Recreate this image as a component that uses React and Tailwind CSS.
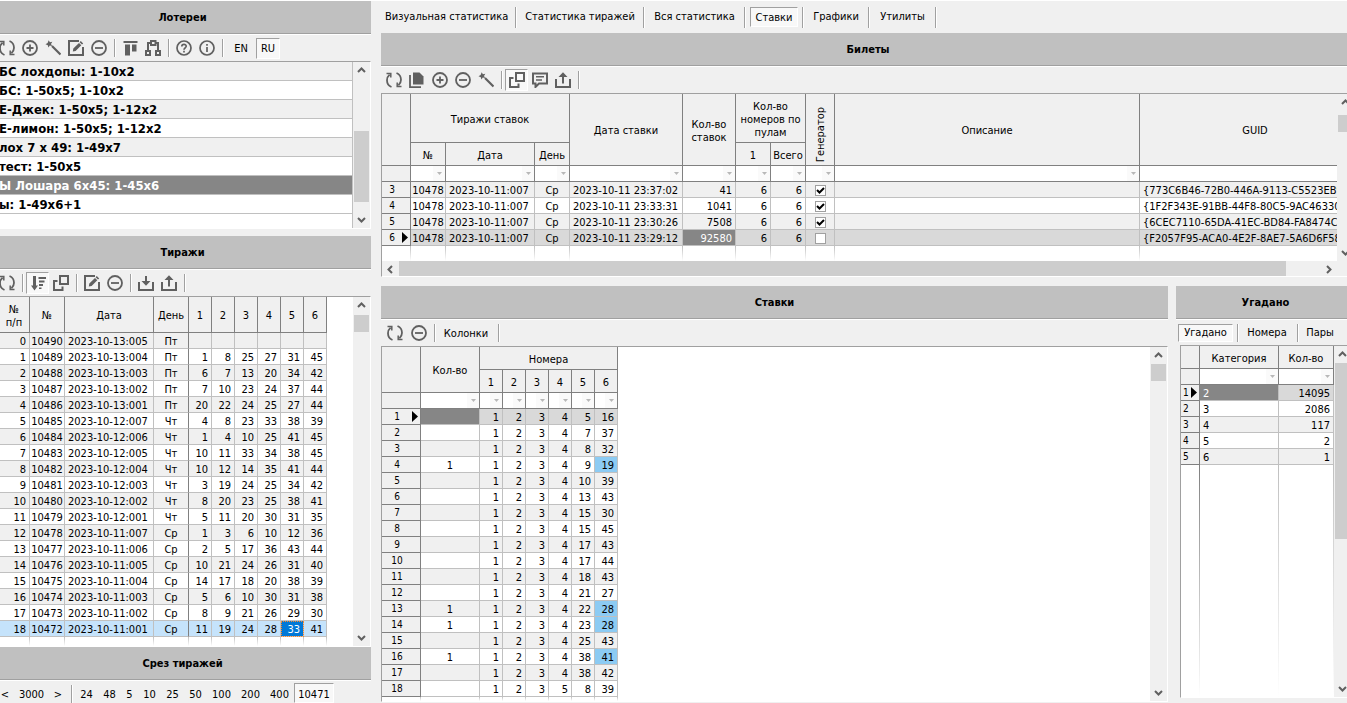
import { useState } from "react";
import clsx from "clsx";

const LOTTERIES = [
  "БС лохдопы: 1-10x2",
  "БС: 1-50x5; 1-10x2",
  "Е-Джек: 1-50x5; 1-12x2",
  "Е-лимон: 1-50x5; 1-12x2",
  "лох 7 x 49: 1-49x7",
  "тест: 1-50x5",
  "Ы Лошара 6x45: 1-45x6",
  "ы: 1-49x6+1",
];

const DRAWS = [
  [10490, "2023-10-13:005", "Пт", ["", "", "", "", "", ""]],
  [10489, "2023-10-13:004", "Пт", [1, 8, 25, 27, 31, 45]],
  [10488, "2023-10-13:003", "Пт", [6, 7, 13, 20, 34, 42]],
  [10487, "2023-10-13:002", "Пт", [7, 10, 23, 24, 37, 44]],
  [10486, "2023-10-13:001", "Пт", [20, 22, 24, 25, 27, 44]],
  [10485, "2023-10-12:007", "Чт", [4, 8, 23, 33, 38, 39]],
  [10484, "2023-10-12:006", "Чт", [1, 4, 10, 25, 41, 45]],
  [10483, "2023-10-12:005", "Чт", [10, 11, 33, 34, 38, 45]],
  [10482, "2023-10-12:004", "Чт", [10, 12, 14, 35, 41, 44]],
  [10481, "2023-10-12:003", "Чт", [3, 19, 24, 25, 34, 42]],
  [10480, "2023-10-12:002", "Чт", [8, 20, 23, 25, 38, 41]],
  [10479, "2023-10-12:001", "Чт", [5, 11, 20, 30, 31, 35]],
  [10478, "2023-10-11:007", "Ср", [1, 3, 6, 10, 12, 36]],
  [10477, "2023-10-11:006", "Ср", [2, 5, 17, 36, 43, 44]],
  [10476, "2023-10-11:005", "Ср", [10, 21, 24, 26, 31, 40]],
  [10475, "2023-10-11:004", "Ср", [14, 17, 18, 20, 38, 39]],
  [10474, "2023-10-11:003", "Ср", [5, 6, 10, 30, 31, 38]],
  [10473, "2023-10-11:002", "Ср", [8, 9, 21, 26, 29, 30]],
  [10472, "2023-10-11:001", "Ср", [11, 19, 24, 28, 33, 41]],
];

const TICKETS = [
  { n: 3, time: "23:37:02", bets: 41, auto: true, guid: "{773C6B46-72B0-446A-9113-C5523EB9E" },
  { n: 4, time: "23:33:31", bets: 1041, auto: true, guid: "{1F2F343E-91BB-44F8-80C5-9AC46330D" },
  { n: 5, time: "23:30:26", bets: 7508, auto: true, guid: "{6CEC7110-65DA-41EC-BD84-FA8474C2" },
  { n: 6, time: "23:29:12", bets: 92580, auto: false, guid: "{F2057F95-ACA0-4E2F-8AE7-5A6D6F58" },
];

const BETS = [
  ["", 4, 5, 16],
  ["", 4, 7, 37],
  ["", 4, 8, 32],
  [1, 4, 9, 19],
  ["", 4, 10, 39],
  ["", 4, 13, 43],
  ["", 4, 15, 30],
  ["", 4, 15, 45],
  ["", 4, 17, 43],
  ["", 4, 17, 44],
  ["", 4, 18, 43],
  ["", 4, 21, 27],
  [1, 4, 22, 28],
  [1, 4, 23, 28],
  ["", 4, 25, 43],
  [1, 4, 38, 41],
  ["", 4, 38, 42],
  ["", 5, 8, 39],
];

const GUESSES = [
  [2, 14095],
  [3, 2086],
  [4, 117],
  [5, 2],
  [6, 1],
];

const NUMS = [1, 2, 3, 4, 5, 6];
const NUM_COLS = ["w-[23px]", "w-[23px]", "w-[23px]", "w-[23px]", "w-[23px]", "w-[23px]"];
const DRAW_COLS = ["w-[35px]", "w-[35px]", "w-[89px]", "w-[35px]", ...NUM_COLS];
const TICKET_COLS = [
  "w-[29px]",
  "w-[35px]",
  "w-[89px]",
  "w-[35px]",
  "w-[113px]",
  "w-[53px]",
  "w-[35px]",
  "w-[35px]",
  "w-[29px]",
  "w-[305px]",
  "w-[231px]",
];
const BET_COLS = ["w-[39px]", "w-[59px]", ...NUM_COLS];
const GUESS_COLS = ["w-[19px]", "w-[79px]", "w-[55px]"];

/* ---------- icons ---------- */

const ICONS = {
  refresh: (
    <g fill="none" stroke="currentColor" strokeWidth="1.800">
      <path d="M5.500 15C2.600 13.800 1 11.200 1 8.200C1 6 1.800 4.200 3.600 2.600" />
      <path d="M10.500 1C13.400 2.200 15 4.800 15 7.800C15 10 14.200 11.800 12.400 13.400" />
      <path d="M0.500 1.500H4.800V5.500" strokeWidth="1.500" />
      <path d="M15.500 14.500H11.200V10.500" strokeWidth="1.500" />
    </g>
  ),
  plus: (
    <g fill="none" stroke="currentColor" strokeWidth="1.800">
      <circle cx="8" cy="8" r="7" />
      <path d="M8 4.500V11.500M4.500 8H11.500" />
    </g>
  ),
  minus: (
    <g fill="none" stroke="currentColor" strokeWidth="1.800">
      <circle cx="8" cy="8" r="7" />
      <path d="M4 8H12" />
    </g>
  ),
  wand: (
    <g>
      <path d="M7 6L15.500 14.500" stroke="currentColor" strokeWidth="2.200" />
      <path
        d="M3.700 0.200L4.900 2.200L7.300 1.800L6 3.900L7.200 6L4.800 5.600L3.400 7.500L2.800 5.200L0.500 4.300L2.600 3Z"
        fill="currentColor"
      />
    </g>
  ),
  edit: (
    <g>
      <path d="M11 1H1V15H15V7" fill="none" stroke="currentColor" strokeWidth="2" />
      <path d="M12.800 1L15.200 3.400L14 4.600L11.600 2.200ZM11 2.900L13.300 5.200L7.600 10.900L4.800 11.400L5.300 8.600Z" fill="currentColor" />
    </g>
  ),
  alignTop: <path d="M1.500 1H15.500V3H1.500ZM3 4.500H8V15.500H3ZM10 4.500H14.500V11.500H10Z" fill="currentColor" />,
  network: (
    <g fill="none" stroke="currentColor" strokeWidth="2">
      <rect x="6" y="1" width="4.500" height="4" />
      <rect x="1" y="11" width="4" height="4" />
      <rect x="11" y="11" width="4" height="4" />
      <path d="M6 3H3V10M10.500 3H13V10" />
    </g>
  ),
  help: (
    <g fill="none" stroke="currentColor" strokeWidth="1.700">
      <circle cx="8" cy="8" r="7" />
      <path d="M5.800 6.500C5.800 3.500 10.300 3.700 10.200 6.300C10.100 7.800 8 7.900 8 9.700M8 10.800V12.500" />
    </g>
  ),
  info: (
    <g fill="none" stroke="currentColor" strokeWidth="1.700">
      <circle cx="8" cy="8" r="7" />
      <path d="M8 7V12M8 4V5.700" />
    </g>
  ),
  sort: (
    <g fill="currentColor">
      <path d="M3 1H6V10.500H8L4.500 15.500L1 10.500H3Z" />
      <path d="M8.500 2H16V4H8.500ZM9 5.500H14.500V7.500H9ZM9 9H13V11H9ZM9 12.500H11.500V14H9Z" />
    </g>
  ),
  popout: (
    <g fill="none" stroke="currentColor" strokeWidth="2">
      <rect x="7" y="1" width="8" height="8" />
      <path d="M4.500 6H1V15H9.500V11.500" />
    </g>
  ),
  download: (
    <g>
      <path d="M1 7V15H15V7" fill="none" stroke="currentColor" strokeWidth="2" />
      <path d="M7 1H9V6H12.500L8 10.800L3.500 6H7Z" fill="currentColor" />
    </g>
  ),
  upload: (
    <g>
      <path d="M1 7V15H15V7" fill="none" stroke="currentColor" strokeWidth="2" />
      <path d="M7 11.500H9V5H12.500L8 0.300L3.500 5H7Z" fill="currentColor" />
    </g>
  ),
  copy: (
    <g>
      <path d="M4 0.500H10.500L14.500 4.500V12.500H4Z" fill="currentColor" />
      <path d="M1 3V15.200H12" fill="none" stroke="currentColor" strokeWidth="1.800" />
    </g>
  ),
  comment: (
    <g fill="none" stroke="currentColor">
      <path d="M1 1.500H15V11.500H7L3.500 15V11.500H1Z" strokeWidth="2" />
      <path d="M4 4.800H12M4 8H10" strokeWidth="1.600" />
    </g>
  ),
};

function Icon({ name }) {
  return (
    <svg viewBox="0 0 16 16" className="size-4 text-[#606060]" aria-hidden="true">
      {ICONS[name]}
    </svg>
  );
}

/* ---------- toolbar pieces ---------- */

const SUNKEN = "border border-t-[#a0a0a0] border-l-[#a0a0a0] border-r-white border-b-white bg-[#f8f8f8]";

function IconButton({ name, label, pressed }) {
  return (
    <button
      type="button"
      aria-label={label}
      aria-pressed={pressed}
      className={clsx("flex h-[22px] w-[23px] shrink-0 items-center justify-center", pressed && SUNKEN, pressed && "pl-px")}
    >
      <Icon name={name} />
    </button>
  );
}

function TextButton({ children, className, pressed, onClick }) {
  return (
    <button
      type="button"
      aria-pressed={pressed}
      onClick={onClick}
      className={clsx("shrink-0 whitespace-nowrap text-center", pressed && SUNKEN, className)}
    >
      {children}
    </button>
  );
}

function Separator() {
  return <span className="mr-0.5 ml-1 h-[18px] w-0.5 shrink-0 border-l border-r border-l-[#a0a0a0] border-r-white" />;
}

function TabSeparator() {
  return <span className="h-[21px] w-0.5 shrink-0 border-l border-r border-l-[#a0a0a0] border-r-white" />;
}

function Toolbar({ children }) {
  return <div className="flex h-[27px] shrink-0 items-center border-t border-white pl-px">{children}</div>;
}

function PanelHeader({ children }) {
  return (
    <h2 className="flex h-[33px] shrink-0 items-center justify-center border-b border-[#a0a0a0] bg-[#c0c0c0] pt-0.5 font-bold">
      {children}
    </h2>
  );
}

/* ---------- scrollbars ---------- */

const ARROWS = {
  up: "M1 6L4.500 2.500L8 6",
  down: "M1 3L4.500 6.500L8 3",
  left: "M6 1L2.500 4.500L6 8",
  right: "M3 1L6.500 4.500L3 8",
};

function ScrollArrow({ dir }) {
  return (
    <button type="button" aria-label={dir} className="flex size-[17px] shrink-0 items-center justify-center">
      <svg viewBox="0 0 9 9" className="size-[9px]" aria-hidden="true">
        <path d={ARROWS[dir]} fill="none" stroke="#606060" strokeWidth="2" />
      </svg>
    </button>
  );
}

// track = [space before thumb, thumb, space after thumb]
function ScrollBar({ track, horizontal }) {
  const [before, thumb, after] = track;
  return (
    <div className={clsx("flex shrink-0 items-stretch bg-[#f0f0f0]", horizontal ? "h-[15px]" : "w-[17px] flex-col")}>
      <ScrollArrow dir={horizontal ? "left" : "up"} />
      <div className={clsx("flex min-h-0 flex-1", !horizontal && "flex-col px-px")}>
        <span style={{ flexGrow: before }} />
        <span className="basis-0 bg-[#cdcdcd]" style={{ flexGrow: thumb }} />
        <span style={{ flexGrow: after }} />
      </div>
      <ScrollArrow dir={horizontal ? "right" : "down"} />
    </div>
  );
}

/* ---------- grid pieces ---------- */

function GridFrame({ children, className }) {
  return (
    <div
      className={clsx(
        "flex overflow-hidden border border-t-[#a0a0a0] border-l-[#a0a0a0] border-r-white border-b-white bg-white",
        className
      )}
    >
      {children}
    </div>
  );
}

function Grid({ cols, children, label, darkFirst }) {
  return (
    <div className="flex min-w-0 flex-1 flex-col overflow-hidden">
      <table aria-label={label} className="w-0 shrink-0 table-fixed border-separate border-spacing-0">
        <colgroup>
          {cols.map((w, i) => (
            <col key={i} className={w} />
          ))}
        </colgroup>
        {children}
      </table>
      <div className="flex min-h-0 flex-1">
        {cols.map((w, i) => (
          <div key={i} className={clsx("flex shrink-0 justify-end", w)}>
            <span
              className={clsx(
                "w-px bg-linear-to-b to-white",
                darkFirst && i === 0 ? "from-[#808080]" : "from-[#c0c0c0]"
              )}
            />
          </div>
        ))}
      </div>
    </div>
  );
}

function Th({ className, children, ...rest }) {
  return (
    <th
      className={clsx(
        "border-r border-b border-[#808080] bg-[#f0f0f0] p-0 pt-0.5 text-center leading-[13px] font-normal",
        className
      )}
      {...rest}
    >
      {children}
    </th>
  );
}

function Td({ className, children }) {
  return (
    <td
      className={clsx(
        "h-4 overflow-hidden border-r border-b border-[#c0c0c0] p-0 pt-0.5 leading-[13px] whitespace-nowrap",
        className
      )}
    >
      {children}
    </td>
  );
}

function RowNumber({ n, current, narrow }) {
  return (
    <th
      scope="row"
      className="h-4 border-r border-b border-[#808080] bg-[#f0f0f0] p-0 text-[10px] leading-[15px] font-normal"
    >
      <div className="flex h-[15px] items-center">
        <span className={narrow ? "pl-0.5 text-left" : "flex-1 pl-0.5 text-center"}>{n}</span>
        <span className={clsx("flex justify-end pr-0.5", narrow ? "flex-1" : "w-2.5")}>
          {current && (
            <svg viewBox="0 0 6 11" className="h-[11px] w-1.5 shrink-0" aria-hidden="true">
              <path d="M0 0L6 5.500L0 11Z" />
            </svg>
          )}
        </span>
      </div>
    </th>
  );
}

function FilterRow({ count }) {
  return (
    <tr>
      <td className="h-4 border-r border-b border-[#808080] bg-[#f0f0f0] p-0" />
      {Array.from({ length: count }, (_, i) => (
        <td key={i} className="h-4 border-r border-b border-[#808080] bg-white p-0">
          <button type="button" aria-label="Фильтр" className="ml-auto flex h-[15px] w-3 items-center justify-center bg-[#fafafa]">
            <svg viewBox="0 0 5 3" className="h-[3px] w-[5px]" aria-hidden="true">
              <path d="M0 0H5L2.500 3Z" fill="#b8b8b8" />
            </svg>
          </button>
        </td>
      ))}
    </tr>
  );
}

function CheckCell({ checked, n }) {
  return (
    <div className="grid h-[13px] place-items-center">
      <input
        type="checkbox"
        defaultChecked={checked}
        aria-label={`Генератор ${n}`}
        className="peer col-start-1 row-start-1 size-[11px] appearance-none border border-[#a0a0a0] bg-white"
      />
      <svg
        viewBox="0 0 9 9"
        className="pointer-events-none invisible col-start-1 row-start-1 size-[9px] peer-checked:visible"
        aria-hidden="true"
      >
        <path d="M1 4L3.500 6.500L8 2" fill="none" stroke="#000" strokeWidth="2" />
      </svg>
    </div>
  );
}

/* ---------- panels ---------- */

function LotteriesPanel() {
  const [selected, setSelected] = useState(6);
  const [lang, setLang] = useState("RU");

  return (
    <section className="flex shrink-0 flex-col">
      <PanelHeader>Лотереи</PanelHeader>
      <Toolbar>
        <IconButton name="refresh" label="Обновить" />
        <IconButton name="plus" label="Добавить" />
        <IconButton name="wand" label="Мастер" />
        <IconButton name="edit" label="Изменить" />
        <IconButton name="minus" label="Удалить" />
        <Separator />
        <IconButton name="alignTop" label="Выравнивание" />
        <IconButton name="network" label="Структура" />
        <Separator />
        <IconButton name="help" label="Справка" />
        <IconButton name="info" label="О программе" />
        <Separator />
        <TextButton className="h-[21px] w-[30px] pt-0.5" pressed={lang === "EN"} onClick={() => setLang("EN")}>
          EN
        </TextButton>
        <TextButton className="h-[21px] w-6 pt-0.5" pressed={lang === "RU"} onClick={() => setLang("RU")}>
          RU
        </TextButton>
      </Toolbar>
      <GridFrame className="h-[168px]">
        <ul className="min-w-0 flex-1 border-r border-[#c0c0c0]">
          {LOTTERIES.map((name, i) => (
            <li key={name}>
              <button
                type="button"
                onClick={() => setSelected(i)}
                className={clsx(
                  "block h-[19px] w-full overflow-hidden border-b border-[#c0c0c0] pt-0.5 pl-1 text-left text-[13px] leading-4 font-bold whitespace-nowrap",
                  i === selected ? "bg-[#868686] text-white" : i % 2 ? "bg-white" : "bg-[#f0f0f0]"
                )}
              >
                {name}
              </button>
            </li>
          ))}
        </ul>
        <ScrollBar track={[52, 70, 9]} />
      </GridFrame>
    </section>
  );
}

function DrawsPanel() {
  return (
    <section className="mt-[7px] flex min-h-0 flex-1 flex-col">
      <PanelHeader>Тиражи</PanelHeader>
      <Toolbar>
        <IconButton name="refresh" label="Обновить" />
        <Separator />
        <IconButton name="sort" label="Сортировка" pressed />
        <IconButton name="popout" label="Окна" />
        <Separator />
        <IconButton name="edit" label="Изменить" />
        <IconButton name="minus" label="Удалить" />
        <Separator />
        <IconButton name="download" label="Загрузить" />
        <IconButton name="upload" label="Выгрузить" />
        <Separator />
      </Toolbar>
      <GridFrame className="min-h-0 flex-1">
        <Grid cols={DRAW_COLS} label="Тиражи">
          <thead>
            <tr>
              <Th className="h-9 pl-1">
                №<br />
                п/п
              </Th>
              <Th>№</Th>
              <Th>Дата</Th>
              <Th>День</Th>
              {NUMS.map((n) => (
                <Th key={n}>{n}</Th>
              ))}
            </tr>
          </thead>
          <tbody>
            {DRAWS.map(([id, date, day, nums], i) => (
              <tr key={id} className={i === 18 ? "bg-[#c5e3fb]" : i % 2 ? "bg-white" : "bg-[#f0f0f0]"}>
                <Td className="px-[3px] text-right">{i}</Td>
                <Td className="text-center">{id}</Td>
                <Td className="px-[3px]">{date}</Td>
                <Td className="border-r-[#808080] text-center">{day}</Td>
                {nums.map((n, k) => (
                  <Td
                    key={k}
                    className={clsx(
                      "px-[3px] text-right",
                      i === 18 && k === 4 && "bg-[#0078d7] text-white outline outline-dotted -outline-offset-1 outline-[#ff8728]"
                    )}
                  >
                    {n}
                  </Td>
                ))}
              </tr>
            ))}
          </tbody>
        </Grid>
        <ScrollBar track={[1, 17, 298]} />
      </GridFrame>
    </section>
  );
}

const SLICES = [
  ["24", "w-[23px]"],
  ["48", "w-[23px]"],
  ["5", "w-[17px]"],
  ["10", "w-[23px]"],
  ["25", "w-[23px]"],
  ["50", "w-[23px]"],
  ["100", "w-[29px]"],
  ["200", "w-[29px]"],
  ["400", "w-[29px]"],
  ["10471", "w-10"],
];

function SlicePanel() {
  const [slice, setSlice] = useState("10471");

  return (
    <section className="flex shrink-0 flex-col">
      <PanelHeader>Срез тиражей</PanelHeader>
      <div className="flex h-[23px] items-end border-t border-white pl-0.5">
        <TextButton className="h-5 w-[18px] pt-1">&lt;</TextButton>
        <TextButton className="h-5 w-[35px] pt-1">3000</TextButton>
        <TextButton className="h-5 w-[18px] pt-1">&gt;</TextButton>
        <Separator />
        {SLICES.map(([value, width]) => (
          <TextButton key={value} className={clsx("h-5 pt-1", width)} pressed={value === slice} onClick={() => setSlice(value)}>
            {value}
          </TextButton>
        ))}
      </div>
    </section>
  );
}

const TABS = [
  ["Визуальная статистика", "w-[134px] pr-2 pl-1"],
  ["Статистика тиражей", "w-[126px]"],
  ["Вся статистика", "w-[99px]"],
  ["Ставки", "w-12"],
  ["Графики", "w-16"],
  ["Утилиты", "w-[65px]"],
];

function MainTabs() {
  const [tab, setTab] = useState("Ставки");

  return (
    <nav className="flex h-8 shrink-0 items-center">
      {TABS.map(([name, width]) => (
        <div key={name} className="flex items-center">
          <TextButton
            pressed={name === tab}
            onClick={() => setTab(name)}
            className={clsx("h-5", width, name === tab && "mx-1 border-t-[#707070] border-l-[#707070] pt-0.5")}
          >
            {name}
          </TextButton>
          <TabSeparator />
        </div>
      ))}
    </nav>
  );
}

function TicketsPanel() {
  return (
    <section className="flex shrink-0 flex-col">
      <PanelHeader>Билеты</PanelHeader>
      <Toolbar>
        <IconButton name="refresh" label="Обновить" />
        <IconButton name="copy" label="Копировать" />
        <IconButton name="plus" label="Добавить" />
        <IconButton name="minus" label="Удалить" />
        <IconButton name="wand" label="Мастер" />
        <Separator />
        <IconButton name="popout" label="Окна" pressed />
        <IconButton name="comment" label="Описание" />
        <IconButton name="upload" label="Выгрузить" />
        <Separator />
      </Toolbar>
      <GridFrame className="h-[184px] flex-col">
        <div className="flex min-h-0 flex-1">
          <Grid cols={TICKET_COLS} label="Билеты">
            <thead>
              <tr>
                <Th rowSpan={2} />
                <Th colSpan={3} className="h-[49px]">
                  Тиражи ставок
                </Th>
                <Th rowSpan={2}>Дата ставки</Th>
                <Th rowSpan={2}>Кол-во ставок</Th>
                <Th colSpan={2}>Кол-во номеров по пулам</Th>
                <Th rowSpan={2} className="align-bottom">
                  <span className="inline-block rotate-180 [writing-mode:vertical-rl]">Генератор</span>
                </Th>
                <Th rowSpan={2}>Описание</Th>
                <Th rowSpan={2}>GUID</Th>
              </tr>
              <tr>
                <Th className="h-[23px]">№</Th>
                <Th>Дата</Th>
                <Th>День</Th>
                <Th>1</Th>
                <Th>Всего</Th>
              </tr>
            </thead>
            <tbody>
              <FilterRow count={10} />
              {TICKETS.map((t, i) => (
                <tr key={t.n} className={i === 3 ? "bg-[#d9d9d9]" : i % 2 ? "bg-white" : "bg-[#f0f0f0]"}>
                  <RowNumber n={t.n} current={i === 3} />
                  <Td className="text-center">10478</Td>
                  <Td className="px-[3px]">2023-10-11:007</Td>
                  <Td className="text-center">Ср</Td>
                  <Td className="px-[3px]">2023-10-11 {t.time}</Td>
                  <Td className={clsx("px-[3px] text-right", i === 3 && "bg-[#868686] text-white")}>{t.bets}</Td>
                  <Td className="px-[3px] text-right">6</Td>
                  <Td className="px-[3px] text-right">6</Td>
                  <Td>
                    <CheckCell checked={t.auto} n={t.n} />
                  </Td>
                  <Td />
                  <Td className="px-[3px]">{t.guid}</Td>
                </tr>
              ))}
            </tbody>
          </Grid>
          <ScrollBar track={[4, 17, 112]} />
        </div>
        <div className="flex bg-[#f0f0f0]">
          <div className="min-w-0 flex-1">
            <ScrollBar horizontal track={[0, 888, 34]} />
          </div>
          <span className="w-[17px]" />
        </div>
      </GridFrame>
    </section>
  );
}

function BetsPanel() {
  return (
    <section className="flex min-w-0 flex-1 flex-col">
      <PanelHeader>Ставки</PanelHeader>
      <Toolbar>
        <div className="flex gap-px pl-px">
          <IconButton name="refresh" label="Обновить" />
          <IconButton name="minus" label="Удалить" />
        </div>
        <Separator />
        <TextButton className="h-5 w-14 pt-px">Колонки</TextButton>
        <Separator />
      </Toolbar>
      <GridFrame className="min-h-0 flex-1">
        <Grid cols={BET_COLS} label="Ставки">
          <thead>
            <tr>
              <Th rowSpan={2} />
              <Th rowSpan={2}>Кол-во</Th>
              <Th colSpan={6} className="h-[23px]">
                Номера
              </Th>
            </tr>
            <tr>
              {NUMS.map((n) => (
                <Th key={n} className="h-[23px]">
                  {n}
                </Th>
              ))}
            </tr>
          </thead>
          <tbody>
            <FilterRow count={7} />
            {BETS.map(([count, n4, n5, n6], i) => (
              <tr key={i} className={i === 0 ? "bg-[#d9d9d9]" : i % 2 ? "bg-white" : "bg-[#f0f0f0]"}>
                <RowNumber n={i + 1} current={i === 0} />
                <Td className={clsx("text-center", i === 0 && "bg-[#868686]")}>{count}</Td>
                {[1, 2, 3, n4, n5].map((n, k) => (
                  <Td key={k} className="px-[3px] text-right">
                    {n}
                  </Td>
                ))}
                <Td className={clsx("px-[3px] text-right", count === 1 && "bg-[#8ccbf3]")}>{n6}</Td>
              </tr>
            ))}
          </tbody>
        </Grid>
        <ScrollBar track={[0, 17, 302]} />
      </GridFrame>
    </section>
  );
}

function GuessedPanel() {
  return (
    <section className="flex w-[179px] shrink-0 flex-col">
      <PanelHeader>Угадано</PanelHeader>
      <div className="flex h-[26px] shrink-0 items-center overflow-hidden border-t border-white pl-0.5">
        <TextButton pressed className="h-[18px] w-[55px] border-t-[#707070] border-l-[#707070]">
          Угадано
        </TextButton>
        <Separator />
        <TextButton className="h-[18px] w-[52px]">Номера</TextButton>
        <Separator />
        <TextButton className="h-[18px] w-[38px]">Пары</TextButton>
      </div>
      <GridFrame className="mr-[3px] mb-1 ml-1 min-h-0 flex-1">
        <Grid cols={GUESS_COLS} label="Угадано" darkFirst>
          <thead>
            <tr>
              <Th className="h-[23px]" />
              <Th>Категория</Th>
              <Th>Кол-во</Th>
            </tr>
          </thead>
          <tbody>
            <FilterRow count={2} />
            {GUESSES.map(([category, count], i) => (
              <tr key={category} className={i === 0 ? "bg-[#d9d9d9]" : i % 2 ? "bg-white" : "bg-[#f0f0f0]"}>
                <RowNumber n={i + 1} current={i === 0} narrow />
                <Td className={clsx("px-[3px]", i === 0 && "bg-[#868686] text-white")}>{category}</Td>
                <Td className="px-[3px] text-right">{count}</Td>
              </tr>
            ))}
          </tbody>
        </Grid>
        <ScrollBar track={[0, 176, 141]} />
      </GridFrame>
    </section>
  );
}

export default function App() {
  return (
    <div className="h-screen overflow-hidden bg-[#f0f0f0] font-['Tahoma','DejaVu_Sans_Condensed','Noto_Sans',sans-serif] text-[11px] leading-[14px] text-black">
      <div className="-mr-2 -ml-1.5 flex h-full gap-2.5 border-t border-white">
        <aside className="flex w-[377px] shrink-0 flex-col">
          <LotteriesPanel />
          <DrawsPanel />
          <SlicePanel />
        </aside>
        <main className="flex min-w-0 flex-1 flex-col">
          <MainTabs />
          <TicketsPanel />
          <div className="mt-[9px] flex min-h-0 flex-1 gap-2 pb-px">
            <BetsPanel />
            <GuessedPanel />
          </div>
        </main>
      </div>
    </div>
  );
}
